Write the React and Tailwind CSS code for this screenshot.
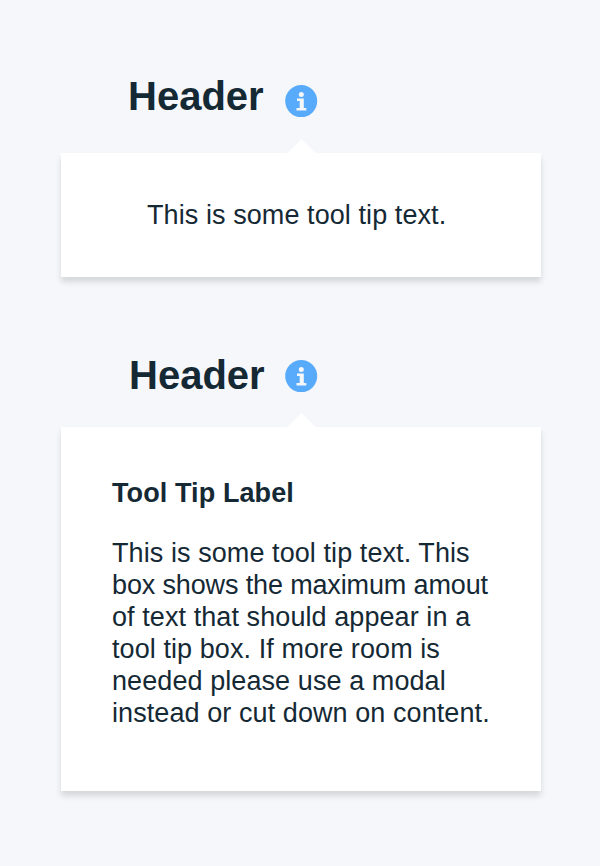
function InfoIcon() {
  return (
    <svg className="block h-8 w-8 shrink-0 overflow-visible" viewBox="0 0 32 32" aria-hidden="true">
      <circle cx="16.2" cy="16.1" r="16" fill="#58aafb" />
      <circle cx="16.3" cy="9.5" r="2.5" fill="#f5f7fb" />
      <path d="M12 13.5h6.8v9.4h2.5v2.5h-9.8v-2.5h3.2v-7h-2.7z" fill="#f5f7fb" />
    </svg>
  );
}

function Header({ className }) {
  return (
    <div className="flex items-start">
      <div className={`w-[157px] shrink-0 ${className}`}>
        <h2 className="text-[40px] leading-[44px] font-bold whitespace-nowrap">Header</h2>
      </div>
      <div className="pt-[11px]"><InfoIcon /></div>
    </div>
  );
}

function Pointer() {
  return (
    <svg className="ml-[226px] block h-3.5 w-[30px]" viewBox="0 0 30 14" aria-hidden="true">
      <path d="M0.5 14 14.5 0 28.5 14z" fill="#fff" />
    </svg>
  );
}

export default function App() {
  return (
    <main className="h-[866px] w-[600px] overflow-hidden bg-[#f5f7fb] pt-[74px] pl-[61px] font-['Liberation_Sans',Arial,sans-serif] text-[#152935]">
      <section className="w-[480px]">
        <div className="h-[65px] pl-[67px]"><Header className="pt-0" /></div>
        <Pointer />
        <div className="h-[124px] bg-white pt-[46px] pl-[86px] shadow-[0_5px_6px_rgba(0,0,0,0.13)]">
          <p className="text-[27px] leading-8 tracking-[0.08px] whitespace-nowrap">This is some tool tip text.</p>
        </div>
      </section>
      <section className="w-[480px] pt-[72px]">
        <div className="h-16 pl-[67px]"><Header className="pt-1 pl-px" /></div>
        <Pointer />
        <div className="h-[364px] bg-white pt-[50px] pl-[51px] shadow-[0_5px_6px_rgba(0,0,0,0.13)]">
          <h3 className="text-[27px] leading-8 font-bold tracking-[0.1px]">Tool Tip Label</h3>
          <p className="pt-7 text-[27px] leading-8 tracking-[0.08px] whitespace-nowrap">
            This is some tool tip text. This<br />
            <span className="tracking-[-0.14px]">box shows the maximum amout</span><br />
            of text that should appear in a<br />
            tool tip box. If more room is<br />
            needed please use a modal<br />
            instead or cut down on content.
          </p>
        </div>
      </section>
    </main>
  );
}
